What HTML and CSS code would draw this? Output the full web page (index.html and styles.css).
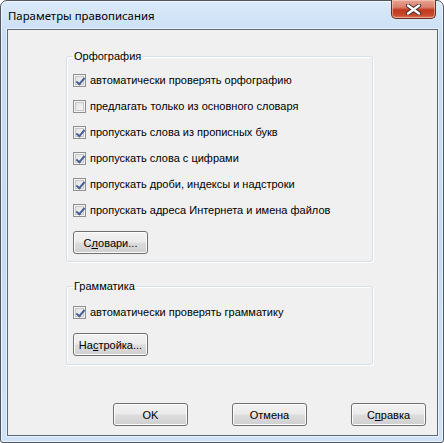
FILE: index.html
```html
<!DOCTYPE html>
<html lang="ru">
<head>
<meta charset="utf-8">
<title>Параметры правописания</title>
<link rel="stylesheet" href="styles.css">
</head>
<body>
<div class="window">
  <div class="titlebar">
    <span class="title">Параметры правописания</span>
    <div class="close">
      <svg width="17" height="11" viewBox="0 0 17 11">
        <path d="M3 1.5 L14 9.5 M14 1.5 L3 9.5" stroke="#3b2a2a" stroke-width="4.2" stroke-linecap="round" fill="none"/>
        <path d="M3 1.5 L14 9.5 M14 1.5 L3 9.5" stroke="#ffffff" stroke-width="2.4" stroke-linecap="round" fill="none"/>
      </svg>
    </div>
  </div>
  <div class="client">
    <fieldset class="group spelling">
      <legend>Орфография</legend>
      <div class="row"><span class="box checked"></span><span>автоматически проверять орфографию</span></div>
      <div class="row"><span class="box"></span><span>предлагать только из основного словаря</span></div>
      <div class="row"><span class="box checked"></span><span>пропускать слова из прописных букв</span></div>
      <div class="row"><span class="box checked"></span><span>пропускать слова с цифрами</span></div>
      <div class="row"><span class="box checked"></span><span>пропускать дроби, индексы и надстроки</span></div>
      <div class="row"><span class="box checked"></span><span>пропускать адреса Интернета и имена файлов</span></div>
      <button class="btn">С<u>л</u>овари...</button>
    </fieldset>
    <fieldset class="group grammar">
      <legend>Грамматика</legend>
      <div class="row"><span class="box checked"></span><span>автоматически проверять грамматику</span></div>
      <button class="btn">На<u>с</u>тройка...</button>
    </fieldset>
    <div class="actions">
      <button class="btn">OK</button>
      <button class="btn">Отмена</button>
      <button class="btn">С<u>п</u>равка</button>
    </div>
  </div>
</div>
</body>
</html>
```
FILE: styles.css
```css
* { box-sizing: border-box; }
html, body { margin: 0; padding: 0; background: #ffffff; }
body { width: 444px; height: 443px; overflow: hidden; }

.window {
  width: 444px;
  height: 443px;
  border: 1px solid #4f5660;
  border-radius: 7px 7px 3px 3px;
  background: linear-gradient(180deg, #dbeafa 0%, #c8ddf4 8%, #c6dcf3 60%, #cfe3f8 100%);
  box-shadow: inset 0 0 0 1px rgba(255,255,255,0.65);
  display: flex;
  flex-direction: column;
  font-family: "Liberation Sans", Arial, sans-serif;
  font-size: 11px;
  color: #000;
}

.titlebar {
  height: 28px;
  display: flex;
  align-items: flex-start;
  justify-content: space-between;
  padding-left: 7px;
  padding-right: 7px;
}

.title {
  font-family: "Noto Sans", "Liberation Sans", sans-serif;
  font-size: 11.4px;
  line-height: 16px;
  margin-top: 7px;
  color: #000;
}

.close {
  width: 45px;
  height: 19px;
  margin-top: -1px;
  border: 1px solid #6b2b22;
  border-top: none;
  border-radius: 0 0 5px 5px;
  background: linear-gradient(180deg, #e8a493 0%, #d9806c 40%, #c0391f 55%, #c84a2d 85%, #dc7d5e 100%);
  box-shadow: inset 0 0 0 1px rgba(255,220,210,0.5);
  display: flex;
  align-items: center;
  justify-content: center;
}
.close svg { display: block; }

.client {
  margin-left: 6px;
  width: 431px;
  height: 407px;
  border: 1px solid #5d6875;
  box-shadow: 0 0 0 1px rgba(255,255,255,0.55);
  background: #f0f0f0;
  padding: 20px 11px 0 58px;
  display: flex;
  flex-direction: column;
}

.group {
  margin: 0;
  width: 307px;
  border: 1px solid #d5dfe5;
  border-radius: 3px;
  box-shadow: inset 1px 1px 0 #ffffff, 1px 1px 0 #ffffff;
  padding: 4px 0 7px 6px;
  display: flex;
  flex-direction: column;
  align-items: flex-start;
}
.group legend {
  padding: 0 1px;
  line-height: 13px;
  margin-left: 0;
}
.grammar {
  margin-top: 18px;
  padding-top: 6px;
  padding-bottom: 8px;
}

.row {
  height: 26px;
  display: flex;
  align-items: center;
  gap: 4px;
  white-space: nowrap;
}

.box {
  width: 13px;
  height: 13px;
  flex: none;
  border: 1px solid #8e8f8f;
  background: linear-gradient(135deg, #dcdcdc 0%, #f0f0f0 60%, #fbfbfb 100%);
  box-shadow: inset 0 0 0 1px #f4f4f4, inset 0 0 0 2px #c8c8c8;
  position: relative;
}
.box.checked::after {
  content: "";
  position: absolute;
  width: 3px;
  height: 7px;
  border: solid #4a5f97;
  border-width: 0 2px 2px 0;
  transform: rotate(40deg);
  transform-origin: center;
  left: 4px;
  top: 1px;
}

.btn {
  width: 75px;
  height: 23px;
  border: 1px solid #707070;
  border-radius: 3px;
  background: linear-gradient(180deg, #f2f2f2 0%, #ebebeb 48%, #dddddd 52%, #cfcfcf 100%);
  box-shadow: inset 0 0 0 1px #fcfcfc;
  font-family: "Liberation Sans", Arial, sans-serif;
  font-size: 11px;
  font-weight: 400;
  color: #000;
  padding: 0;
  margin: 0;
}
.group .btn { margin-top: 8px; }
.btn u { text-decoration: underline; text-underline-offset: 1px; }

.actions {
  margin-top: 38px;
  margin-left: -58px;
  display: flex;
  justify-content: flex-end;
  gap: 44px;
}
```
